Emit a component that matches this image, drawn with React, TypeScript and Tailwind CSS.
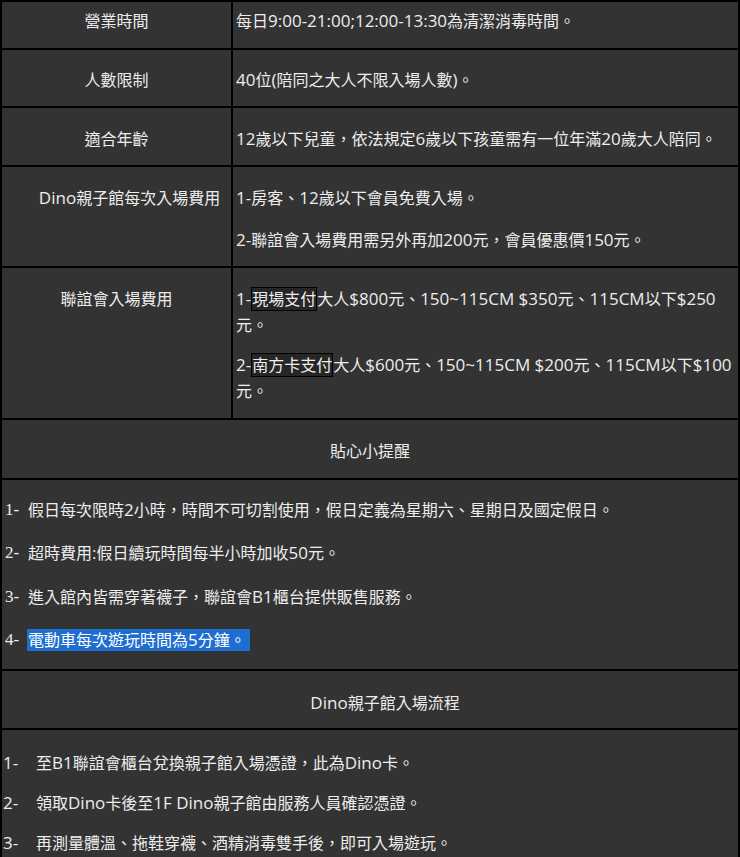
import React from "react";

const font = {
  fontFamily: '"Open Sans", "Noto Sans CJK TC", sans-serif',
};

function T({ children }: { children: string }) {
  const parts = children.split(/([\x20-\x7E]+)/);
  return (
    <>
      {parts.map((p, i) =>
        /^[\x20-\x7E]+$/.test(p) ? (
          <span key={i} className="text-[17px]">
            {p}
          </span>
        ) : (
          <React.Fragment key={i}>{p}</React.Fragment>
        )
      )}
    </>
  );
}

function Box({ children }: { children: React.ReactNode }) {
  return <span className="border border-black bg-[#262626]">{children}</span>;
}

export default function App() {
  return (
    <div
      className="w-[740px] h-[857px] overflow-hidden bg-[#333333] text-[#ededed] text-[16px] leading-[26px] border-t-2 border-l-2 border-r-2 border-black"
      style={font}
    >
      {/* Row 1 */}
      <div className="grid grid-cols-[231px_1fr] h-[48px] border-b-2 border-black">
        <div className="border-r-2 border-black text-center pt-[6px]">營業時間</div>
        <div className="pl-[3px] pt-[6px] whitespace-nowrap">
          <T>每日9:00-21:00;12:00-13:30為清潔消毒時間。</T>
        </div>
      </div>
      {/* Row 2 */}
      <div className="grid grid-cols-[231px_1fr] h-[58px] border-b-2 border-black">
        <div className="border-r-2 border-black text-center pt-[17px]">人數限制</div>
        <div className="pl-[3px] pt-[17px] whitespace-nowrap">
          <T>40位(陪同之大人不限入場人數)。</T>
        </div>
      </div>
      {/* Row 3 */}
      <div className="grid grid-cols-[231px_1fr] h-[59px] border-b-2 border-black">
        <div className="border-r-2 border-black text-center pt-[18px]">適合年齡</div>
        <div className="pl-[3px] pt-[18px] whitespace-nowrap">
          <T>12歲以下兒童，依法規定6歲以下孩童需有一位年滿20歲大人陪同。</T>
        </div>
      </div>
      {/* Row 4 */}
      <div className="grid grid-cols-[231px_1fr] h-[101px] border-b-2 border-black">
        <div className="border-r-2 border-black text-center pt-[18px] pl-[26px] whitespace-nowrap">
          <T>Dino親子館每次入場費用</T>
        </div>
        <div className="pl-[3px] pt-[18px] flex flex-col gap-[16px] whitespace-nowrap">
          <p>
            <T>1-房客、12歲以下會員免費入場。</T>
          </p>
          <p>
            <T>2-聯誼會入場費用需另外再加200元，會員優惠價150元。</T>
          </p>
        </div>
      </div>
      {/* Row 5 */}
      <div className="grid grid-cols-[231px_1fr] h-[152px] border-b-2 border-black">
        <div className="border-r-2 border-black text-center pt-[18px]">聯誼會入場費用</div>
        <div className="pl-[3px] pt-[18px] flex flex-col gap-[14px] whitespace-nowrap">
          <p>
            <T>1-</T>
            <Box>現場支付</Box>
            <T>大人$800元、150~115CM $350元、115CM以下$250</T>
            <br />
            元。
          </p>
          <p>
            <T>2-</T>
            <Box>南方卡支付</Box>
            <T>大人$600元、150~115CM $200元、115CM以下$100</T>
            <br />
            元。
          </p>
        </div>
      </div>
      {/* Row 6 header */}
      <div className="h-[60px] border-b-2 border-black text-center pt-[18px]">貼心小提醒</div>
      {/* Row 7 */}
      <div className="h-[191px] border-b-2 border-black pt-[17px] pl-[3px] flex flex-col gap-[17.3px] whitespace-nowrap">
        {[
          "假日每次限時2小時，時間不可切割使用，假日定義為星期六、星期日及國定假日。",
          "超時費用:假日續玩時間每半小時加收50元。",
          "進入館內皆需穿著襪子，聯誼會B1櫃台提供販售服務。",
        ].map((t, i) => (
          <div key={i} className="flex">
            <span
              className="w-[23px] shrink-0 text-[17px]"
              style={{ fontFamily: '"Liberation Serif", serif' }}
            >
              {i + 1}-
            </span>
            <span>
              <T>{t}</T>
            </span>
          </div>
        ))}
        <div className="flex">
          <span
            className="w-[22px] shrink-0 text-[17px]"
            style={{ fontFamily: '"Liberation Serif", serif' }}
          >
            4-
          </span>
          <span className="bg-[#1e6dd0] text-white pl-[1px] pr-[4px] leading-[22px] my-[2px]">
            <T>電動車每次遊玩時間為5分鐘。</T>
          </span>
        </div>
      </div>
      {/* Row 8 header */}
      <div className="h-[59px] border-b-2 border-black text-center pt-[19px] pl-[30px]">
        <T>Dino親子館入場流程</T>
      </div>
      {/* Row 9 */}
      <div className="h-[127px] pt-[20px] pl-[1px] flex flex-col gap-[14px] whitespace-nowrap">
        {[
          "至B1聯誼會櫃台兌換親子館入場憑證，此為Dino卡。",
          "領取Dino卡後至1F Dino親子館由服務人員確認憑證。",
          "再測量體溫、拖鞋穿襪、酒精消毒雙手後，即可入場遊玩。",
        ].map((t, i) => (
          <div key={i} className="flex">
            <span className="w-[33px] shrink-0 text-[17px]">{i + 1}-</span>
            <span>
              <T>{t}</T>
            </span>
          </div>
        ))}
      </div>
    </div>
  );
}
